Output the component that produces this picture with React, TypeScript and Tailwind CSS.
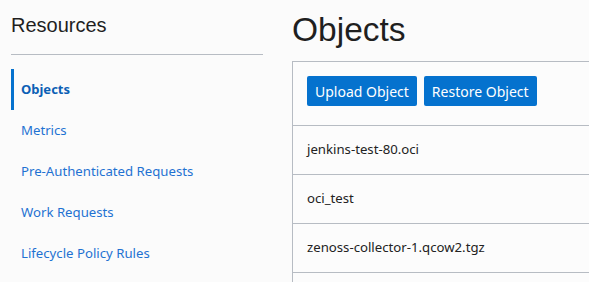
import React from "react";

const navItems = [
  "Metrics",
  "Pre-Authenticated Requests",
  "Work Requests",
  "Lifecycle Policy Rules",
];

const rows = ["jenkins-test-80.oci", "oci_test", "zenoss-collector-1.qcow2.tgz", ""];

export default function App() {
  return (
    <div
      className="flex w-[589px] h-[282px] overflow-hidden bg-[#fbfbfb]"
      style={{ fontFamily: '"Noto Sans", "Open Sans", sans-serif' }}
    >
      <aside className="w-[252px] ml-[11px] shrink-0">
        <h2
          className="pt-[13px] text-[20px] leading-[24px] text-[#1f1f1f]"
          style={{ fontFamily: '"Liberation Sans", Arial, sans-serif' }}
        >
          Resources
        </h2>
        <div className="mt-[17px] h-px bg-[#b7bcc3]" />
        <nav className="mt-[14px] flex flex-col">
          <div className="h-[41px] flex items-center border-l-[3px] border-[#0572ce] pl-[7px] text-[13px] font-bold text-[#0b5fb5]">
            Objects
          </div>
          {navItems.map((n) => (
            <div key={n} className="h-[41px] flex items-center pl-[10px] text-[13.2px] text-[#1f72d2]">
              {n}
            </div>
          ))}
        </nav>
      </aside>
      <main className="ml-[29px] flex-1 flex flex-col min-w-0">
        <h1
          className="pt-[10px] text-[33.5px] leading-[40px] text-[#1f1f1f]"
          style={{ fontFamily: '"Liberation Sans", Arial, sans-serif' }}
        >
          Objects
        </h1>
        <div className="mt-[11px] flex-1 border-l border-t border-[#b7bcc3] bg-[#fcfcfc]">
          <div className="flex gap-[7px] pl-[14px] pt-[14px] pb-[19px] border-b border-[#b7bcc3]">
            <button className="h-[30px] px-[8px] rounded-[2px] bg-[#0572ce] text-white text-[14px]">
              Upload Object
            </button>
            <button className="h-[30px] px-[8px] rounded-[2px] bg-[#0572ce] text-white text-[14px]">
              Restore Object
            </button>
          </div>
          {rows.map((r, i) => (
            <div
              key={i}
              className="h-[49px] flex items-center pl-[14px] border-b border-[#b7bcc3] text-[13.2px] text-[#222222]"
            >
              {r}
            </div>
          ))}
        </div>
      </main>
    </div>
  );
}
